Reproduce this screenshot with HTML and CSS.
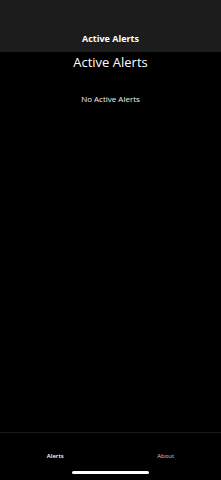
FILE: index.html
```html
<!DOCTYPE html>
<html lang="en">
<head>
  <meta charset="UTF-8">
  <meta name="viewport" content="width=device-width, initial-scale=1.0">
  <title>Active Alerts</title>
  <link rel="stylesheet" href="styles.css">
</head>
<body>
  <div class="app">
    <header class="topbar">
      <h1 class="topbar-title">Active Alerts</h1>
    </header>
    <main class="content">
      <h2 class="page-title">Active Alerts</h2>
      <p class="empty">No Active Alerts</p>
    </main>
    <nav class="tabs">
      <a class="tab active" href="#">Alerts</a>
      <a class="tab" href="#">About</a>
    </nav>
    <div class="home-bar">
      <span class="home-indicator"></span>
    </div>
  </div>
</body>
</html>
```

FILE: styles.css
```css
* {
  box-sizing: border-box;
  margin: 0;
  padding: 0;
  font-family: 'Open Sans', 'Noto Sans', sans-serif;
}

body {
  background: #000;
  color: #fff;
}

.app {
  display: flex;
  flex-direction: column;
  height: 480px;
}

.topbar {
  background: #1c1c1c;
  height: 52px;
  display: flex;
  align-items: flex-end;
  justify-content: center;
  padding-bottom: 7px;
}

.topbar-title {
  font-size: 9px;
  font-weight: 700;
  line-height: 12px;
}

.content {
  flex: 1;
  text-align: center;
}

.page-title {
  font-size: 13px;
  font-weight: 400;
  line-height: 20px;
}

.empty {
  font-size: 8px;
  line-height: 12px;
  margin-top: 21px;
  color: #eee;
}

.tabs {
  border-top: 1px solid #1a1a1a;
  height: 32px;
  display: flex;
  align-items: flex-end;
  padding-bottom: 3px;
}

.tab {
  flex: 1;
  text-align: center;
  font-size: 6px;
  line-height: 9px;
  color: #ccc;
  text-decoration: none;
}

.tab.active {
  color: #fff;
  font-weight: 600;
}

.home-bar {
  height: 16px;
  display: flex;
  justify-content: center;
  align-items: center;
}

.home-indicator {
  width: 77px;
  height: 3px;
  border-radius: 2px;
  background: #fff;
}
```
